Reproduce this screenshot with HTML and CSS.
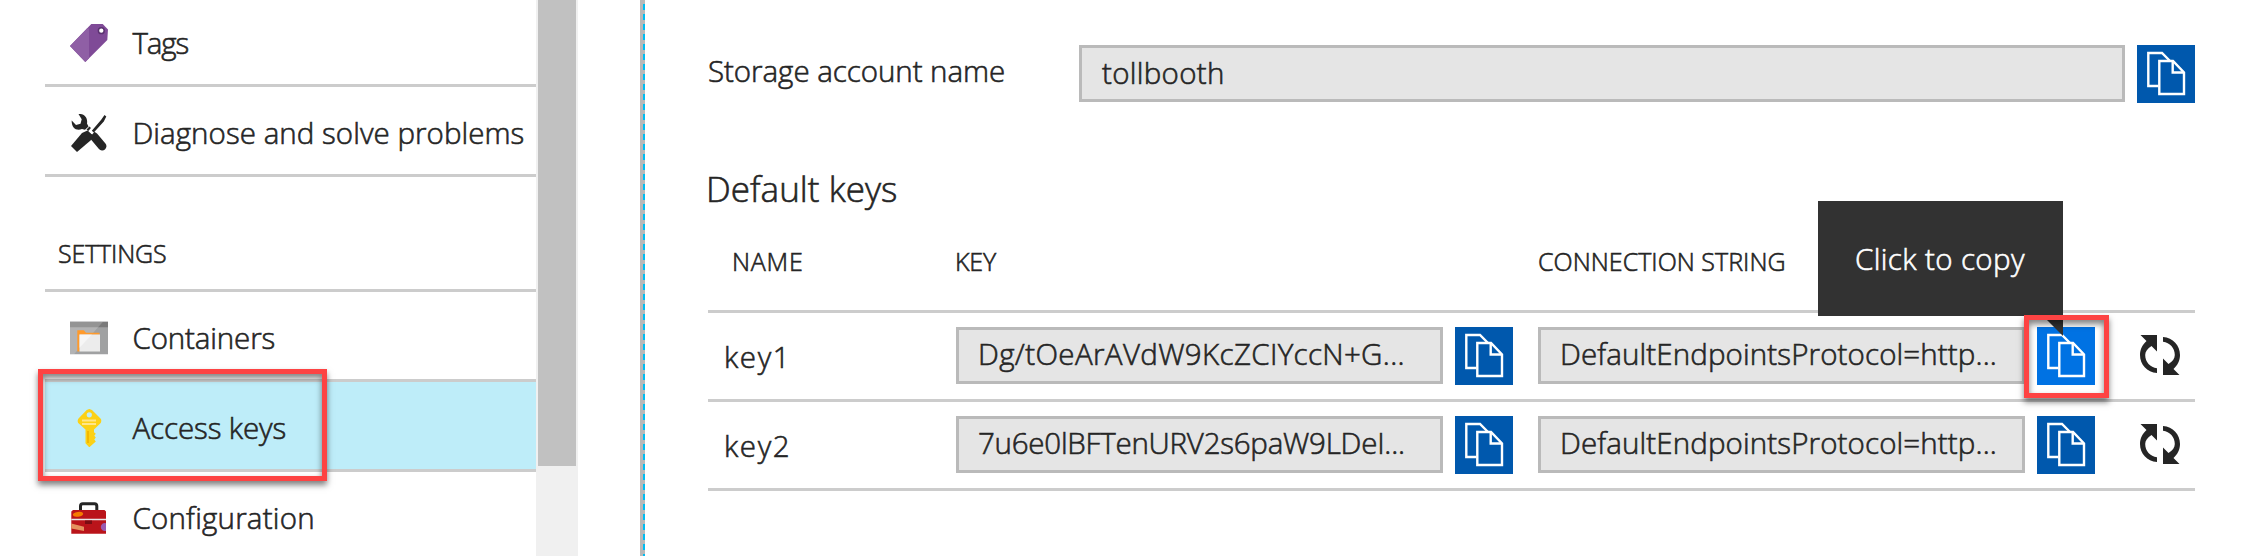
FILE: index.html
```html
<!DOCTYPE html>
<html lang="en">
<head>
<meta charset="utf-8">
<title>Access keys</title>
<link rel="stylesheet" href="styles.css">
</head>
<body>
<svg class="defs" width="0" height="0" aria-hidden="true">
  <symbol id="copy" viewBox="0 0 58 58">
    <g fill="none" stroke="#fff" stroke-width="2.400">
      <path d="M21.500 41H11.300V8H25l8 8"/>
      <path d="M22.300 16H36l11 11.500V49H22.300z"/>
      <path d="M35.700 16v11.500H47"/>
    </g>
  </symbol>
  <symbol id="refresh" viewBox="0 0 40 40">
    <g fill="#252525">
      <path d="M.5 0H17v16.500L11.500 11C7.500 13.500 5.200 16.500 5.200 20c0 7 5 12.400 11.800 13.200V38C7 37.200 0 29.700 0 20 0 14.500 2.500 9.500 6.500 6z"/>
      <path d="M.5 0H17v16.500L11.500 11C7.500 13.500 5.200 16.500 5.200 20c0 7 5 12.400 11.800 13.200V38C7 37.200 0 29.700 0 20 0 14.500 2.500 9.500 6.500 6z" transform="rotate(180 20 20)"/>
    </g>
  </symbol>
</svg>
<div class="app">
  <nav class="menu">
    <div class="item first">
      <svg class="icon" viewBox="0 0 38 38"><path fill="#7f4a97" d="M0 22 21.300 0h11.400L38 5.500 37.300 16l-22 22z"/><path fill="#8f5fa5" d="M0 22 17 4.400h2v29.900L15.300 38z"/><circle cx="31.300" cy="6.700" r="2.900" fill="#fff" stroke="#5b3270" stroke-width="1.500"/></svg>
      <span class="ls-tags">Tags</span>
    </div>
    <div class="item">
      <svg class="icon" viewBox="0 0 38 38"><path fill="#252525" d="M8.500 0c5.500-.6 9.500 3.500 8.500 9.500l1.500 3-3.500 3.300-3-.7C6 17.500 1.300 13.500 1.700 6.500L6 11l4.500-1.200 1.200-4.500z"/><path d="M24 22.500 32.200 32.200" stroke="#252525" stroke-width="8.500" stroke-linecap="round"/><path d="m18 14 6 6" stroke="#252525" stroke-width="4"/><path fill="none" stroke="#fff" stroke-width="5" d="M20 19 27 11"/><path fill="#252525" d="m34.500 1 1.800 1.500-2.500 5-10 11-2-1.800L31 6z"/><path fill="#252525" d="m17.500 16.500 6 5.500-3 4.500L7 38l-6-6 11-13z"/></svg>
      <span class="ls-diag">Diagnose and solve problems</span>
    </div>
    <div class="section">SETTINGS</div>
    <div class="item">
      <svg class="icon" viewBox="0 -2.700 38 38"><path fill="#a0a1a2" d="M0 0h38v32.500H0z"/><path fill="#7a7a7a" d="M0 0h38v5.500H0z"/><path fill="#fff" opacity=".2" d="M0 0h33L4 32.500H0z"/><path fill="#ff9a2b" d="M7.300 8.500h6.500l2.200 2.600h13.500v2H9.500v16.600H7.300z"/><path fill="#ececec" d="M9.500 12.800H30v17H9.500z"/><path fill="#fff" opacity=".5" d="M9.500 12.800H22L9.500 26z"/></svg>
      <span class="ls-cont">Containers</span>
    </div>
    <div class="item selected">
      <svg class="icon" viewBox="0 0 38 38"><path fill="#fcd116" fill-rule="evenodd" d="M19.300 0 22 1l8.500 8.500q1.500 2 .2 4.500L24 20.500v2.700l1.800 1.600-1.500 2 1.500 1.800-1.500 2 1.500 1.800-6.500 5.900-3.800-4V20.500L8.200 14Q7 11.500 8.500 9.500L16.700 1zM19.300 3.200a2.600 2.600 0 1 0 0 5.200 2.600 2.600 0 0 0 0-5.200z"/><path d="M12 11.500h14M12 15h14" stroke="#ffe68a" stroke-width="1.800"/><path d="M18 22v12" stroke="#f3b800" stroke-width="2"/></svg>
      <span class="ls-acc">Access keys</span>
      <div class="mark mark-menu"></div>
    </div>
    <div class="item">
      <svg class="icon" viewBox="0 -3 38 38"><path d="M10.500 9V4q0-2.300 2.300-2.300h11.700q2.300 0 2.300 2.300v5" fill="none" stroke="#252525" stroke-width="3"/><path fill="#ba141a" d="M3 8h31.500l1.500 1.500v22.200H1.300V9.500z"/><path fill="#e8e8e8" d="M1.300 16.700H36v1.500H1.300z"/><path fill="#7a0c12" d="M15 18.500h7V22h-7z"/><ellipse cx="8" cy="12.300" rx="5.200" ry="2.400" fill="#f57c00" transform="rotate(-8 8 12.300)"/><path fill="#e59360" d="m1.300 21.500 12.700 3.200V29L1.300 26.500z"/><path fill="#9a5bb0" d="M36 21.300v7.600a4 4 0 1 1 0-7.600z"/></svg>
      <span class="ls-conf">Configuration</span>
    </div>
  </nav>
  <div class="scrollbar"><div class="thumb"></div></div>
  <div class="divider"></div>
  <main class="main">
    <div class="account">
      <label class="label ls-stor">Storage account name</label>
      <div class="field account-field ls-toll">tollbooth</div>
      <button class="copy"><svg viewBox="0 0 58 58"><use href="#copy"/></svg></button>
    </div>
    <h2 class="heading">Default keys</h2>
    <div class="row head">
      <span class="h-name">NAME</span><span class="h-key">KEY</span><span class="h-conn">CONNECTION STRING</span>
    </div>
    <div class="row">
      <span class="name">key1</span>
      <div class="field ls-dg">Dg/tOeArAVdW9KcZCIYccN+G...</div>
      <button class="copy"><svg viewBox="0 0 58 58"><use href="#copy"/></svg></button>
      <div class="field conn ls-def">DefaultEndpointsProtocol=http...</div>
      <button class="copy hover"><svg viewBox="0 0 58 58"><use href="#copy"/></svg>
        <span class="tooltip">Click to copy</span>
        <span class="mark mark-copy"></span>
      </button>
      <svg class="refresh" viewBox="0 0 40 40"><use href="#refresh"/></svg>
    </div>
    <div class="row">
      <span class="name">key2</span>
      <div class="field ls-7u">7u6e0lBFTenURV2s6paW9LDeI...</div>
      <button class="copy"><svg viewBox="0 0 58 58"><use href="#copy"/></svg></button>
      <div class="field conn ls-def">DefaultEndpointsProtocol=http...</div>
      <button class="copy"><svg viewBox="0 0 58 58"><use href="#copy"/></svg></button>
      <svg class="refresh" viewBox="0 0 40 40"><use href="#refresh"/></svg>
    </div>
  </main>
</div>
</body>
</html>
```
FILE: styles.css
```css
* { box-sizing: border-box; }
body {
  margin: 0;
  height: 556px;
  overflow: hidden;
  background: #fff;
  color: #252525;
  font: 300 29.5px/40px "Open Sans", "Noto Sans", sans-serif;
  -webkit-text-stroke: .6px currentColor;
  white-space: nowrap;
}
.defs { position: absolute; }
.app { display: flex; height: 556px; }

/* Menu */
.menu { width: 536px; padding-left: 45px; flex: none; }
.item {
  position: relative;
  display: flex;
  align-items: center;
  height: 90px;
  padding: 4px 0 0 25px;
  border-bottom: 3px solid #ccc;
}
.item.first { margin-top: -3px; }
.item.selected { background: #beedf9; }
.icon { width: 38px; height: 38px; margin-right: 24.500px; flex: none; }
.section {
  height: 115px;
  padding: 56px 0 0 13px;
  border-bottom: 3px solid #ccc;
  font-size: 25px;
  letter-spacing: -.15px;
}
.scrollbar { width: 42px; padding: 0 2px; background: #f0f0f0; flex: none; }
.thumb { height: 466px; background: #c1c1c1; }
.divider {
  width: 5px;
  margin-left: 62px;
  flex: none;
  background:
    repeating-linear-gradient(to bottom, #b9b9b9 0 4px, #00bcf2 4px 10px) right / 2px 100% no-repeat,
    #b9b9b9;
}

/* Highlight frames */
.mark {
  position: absolute;
  z-index: 3;
  border: 5px solid #fd4343;
  box-shadow: 0 4px 6px rgba(0, 0, 0, .5), inset 0 4px 6px rgba(0, 0, 0, .5);
}
.mark-menu { left: -7px; top: -13px; width: 289px; height: 112px; }
.mark-copy { left: -13px; top: -12px; width: 85px; height: 83px; }

/* Content */
.main { width: 1550px; padding: 45px 0 0 63px; flex: none; }
.account { display: flex; height: 58px; }
.label { width: 371px; padding-top: 6px; }
.field {
  width: 487px;
  height: 57px;
  padding: 4px 18px 0 19px;
  border: 3px solid #bababa;
  background: #e5e5e5;
  margin-right: 12px;
  flex: none;
}
.account-field { width: 1046px; padding: 5px 20px 0; }
.copy {
  position: relative;
  width: 58px;
  height: 58px;
  padding: 0;
  border: 0;
  background: #0058ad;
  font: inherit;
  color: inherit;
  flex: none;
}
.copy svg { display: block; width: 58px; height: 58px; }
.copy.hover { background: #0072e3; }
.copy + .conn { margin-left: 25px; }
.heading {
  margin: 62px 0 -1px -2px;
  height: 48px;
  font-size: 35px;
  line-height: 48px;
  font-weight: 300;
  letter-spacing: .04px;
}
.row {
  display: flex;
  height: 89px;
  padding-top: 14px;
  width: 1487px;
  border-bottom: 3px solid #ccc;
}
.head { height: 101px; padding-top: 29px; font-size: 25px; }
.h-name { width: 247px; padding-left: 24px; letter-spacing: .79px; }
.h-key { width: 583px; letter-spacing: -.17px; }
.h-conn { letter-spacing: .03px; }
.name { width: 248px; padding: 10px 0 0 16px; letter-spacing: 1.6px; }
.refresh { width: 40px; height: 40px; margin: 8px 0 0 45px; }
.tooltip {
  position: absolute;
  z-index: 2;
  left: -219px;
  top: -126px;
  width: 245px;
  height: 115px;
  padding: 38px 0 0 37px;
  background: #323232;
  color: #fff;
  text-align: left;
  letter-spacing: .39px;
}
.tooltip::after {
  content: "";
  position: absolute;
  right: 0;
  top: 115px;
  width: 20px;
  height: 20px;
  background: #323232;
  clip-path: polygon(0 0, 100% 0, 100% 100%);
}

/* Tracking */
.ls-tags { letter-spacing: -1.14px; }
.ls-diag { letter-spacing: .04px; }
.ls-cont { letter-spacing: -.14px; }
.ls-acc { letter-spacing: -.11px; }
.ls-conf { letter-spacing: .2px; }
.ls-stor { letter-spacing: -.05px; }
.ls-toll { letter-spacing: .3px; }
.ls-dg { letter-spacing: .35px; }
.ls-7u { letter-spacing: -.24px; }
.ls-def { letter-spacing: .12px; }
```
